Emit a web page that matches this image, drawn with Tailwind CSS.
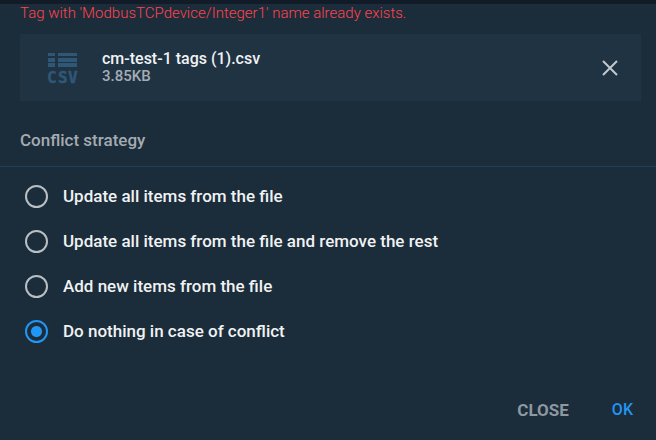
<!DOCTYPE html>
<html lang="en">
<head>
<meta charset="utf-8">
<meta name="viewport" content="width=device-width, initial-scale=1">
<title>Import tags</title>
<script src="https://cdn.jsdelivr.net/npm/@tailwindcss/browser@4"></script>
</head>
<body class="min-h-screen bg-[#1b2c3a] font-['Roboto',sans-serif] font-medium text-[#f0f2f3]">
<main class="flex min-h-screen flex-col border-t-4 border-[#121c29]">
  <p role="alert" class="px-5 text-[15px] font-light leading-[18px] text-[#ff4450]">Tag with 'ModbusTCPdevice/Integer1' name already exists.</p>

  <section aria-label="Selected file" class="ml-5 mr-[15px] mt-3 flex items-center bg-[#203343] py-[13px] pl-6 pr-[19px]">
    <svg class="h-[41px] w-[38px] shrink-0" viewBox="-4 -3 38 41" fill="#2f5877" role="img" aria-label="CSV file">
      <path d="M0 3h7v3H0zM10 3h19v3H10zM0 8h7v4H0zM10 8h19v4H10zM0 13h7v4H0zM10 13h19v4H10z"/>
      <text x="-1 10 20" y="33" font-family="DejaVu Sans Mono, monospace" font-weight="700" font-size="16" stroke="#2f5877" stroke-width=".4">CSV</text>
    </svg>
    <div class="ml-5 grow">
      <h2 class="text-base leading-[18px]">cm-test-1 tags (1).csv</h2>
      <p class="text-[15px] leading-[17px] text-[#a5adb4]">3.85KB</p>
    </div>
    <button type="button" aria-label="Remove file" class="flex size-6 items-center justify-center">
      <svg class="size-4" viewBox="0 0 16 16" fill="none" stroke="#c3c8cc" stroke-width="2"><path d="M1 1l14 14M15 1L1 15"/></svg>
    </button>
  </section>

  <form class="flex grow flex-col">
    <fieldset>
      <legend class="w-full border-b border-[#1f4058] px-5 pb-[14px] pt-[27px] text-[17px] leading-6 text-[#a4abb1]">Conflict strategy</legend>
      <div class="flex flex-col gap-[21px] px-[25px] pt-[17px]">
        <label class="flex items-center gap-[15px] text-[17px] leading-6"><input type="radio" name="strategy" class="size-[23px] shrink-0 appearance-none rounded-full border-2 border-[#b9bfc4] checked:border-[#2196f3] checked:bg-[radial-gradient(circle,#2196f3_5px,transparent_6px)]">Update all items from the file</label>
        <label class="flex items-center gap-[15px] text-[17px] leading-6"><input type="radio" name="strategy" class="size-[23px] shrink-0 appearance-none rounded-full border-2 border-[#b9bfc4] checked:border-[#2196f3] checked:bg-[radial-gradient(circle,#2196f3_5px,transparent_6px)]">Update all items from the file and remove the rest</label>
        <label class="flex items-center gap-[15px] text-[17px] leading-6"><input type="radio" name="strategy" class="size-[23px] shrink-0 appearance-none rounded-full border-2 border-[#b9bfc4] checked:border-[#2196f3] checked:bg-[radial-gradient(circle,#2196f3_5px,transparent_6px)]">Add new items from the file</label>
        <label class="flex items-center gap-[15px] text-[17px] leading-6"><input type="radio" name="strategy" checked class="size-[23px] shrink-0 appearance-none rounded-full border-2 border-[#b9bfc4] checked:border-[#2196f3] checked:bg-[radial-gradient(circle,#2196f3_5px,transparent_6px)]">Do nothing in case of conflict</label>
      </div>
    </fieldset>
    <div class="mt-auto flex justify-end gap-[43px] pb-[18px] pr-[23px] text-base leading-6">
      <button type="button" class="text-[17px] font-bold text-[#8d98a1]">CLOSE</button>
      <button type="submit" class="text-[#2196f3]">OK</button>
    </div>
  </form>
</main>
</body>
</html>
